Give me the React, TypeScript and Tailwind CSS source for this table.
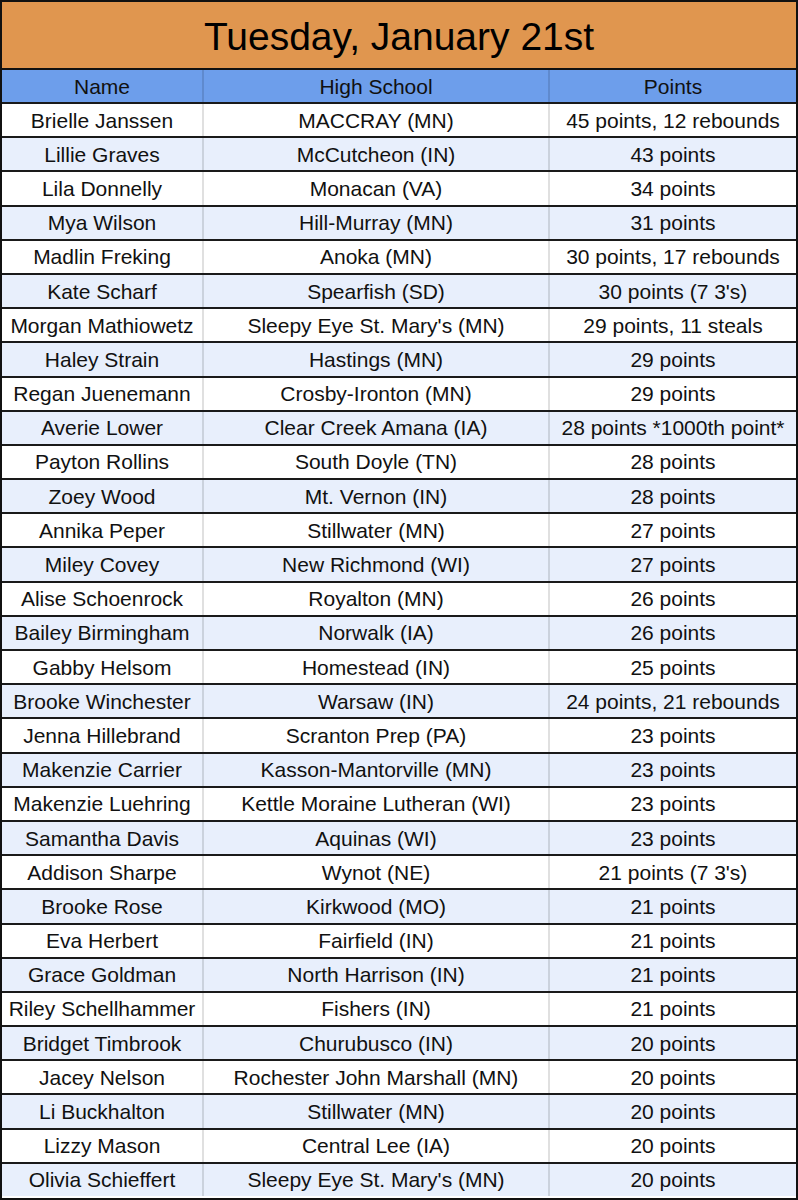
import React from "react";

const rows: [string, string, string][] = [
  ["Brielle Janssen", "MACCRAY (MN)", "45 points, 12 rebounds"],
  ["Lillie Graves", "McCutcheon (IN)", "43 points"],
  ["Lila Donnelly", "Monacan (VA)", "34 points"],
  ["Mya Wilson", "Hill-Murray (MN)", "31 points"],
  ["Madlin Freking", "Anoka (MN)", "30 points, 17 rebounds"],
  ["Kate Scharf", "Spearfish (SD)", "30 points (7 3's)"],
  ["Morgan Mathiowetz", "Sleepy Eye St. Mary's (MN)", "29 points, 11 steals"],
  ["Haley Strain", "Hastings (MN)", "29 points"],
  ["Regan Juenemann", "Crosby-Ironton (MN)", "29 points"],
  ["Averie Lower", "Clear Creek Amana (IA)", "28 points *1000th point*"],
  ["Payton Rollins", "South Doyle (TN)", "28 points"],
  ["Zoey Wood", "Mt. Vernon (IN)", "28 points"],
  ["Annika Peper", "Stillwater (MN)", "27 points"],
  ["Miley Covey", "New Richmond (WI)", "27 points"],
  ["Alise Schoenrock", "Royalton (MN)", "26 points"],
  ["Bailey Birmingham", "Norwalk (IA)", "26 points"],
  ["Gabby Helsom", "Homestead (IN)", "25 points"],
  ["Brooke Winchester", "Warsaw (IN)", "24 points, 21 rebounds"],
  ["Jenna Hillebrand", "Scranton Prep (PA)", "23 points"],
  ["Makenzie Carrier", "Kasson-Mantorville (MN)", "23 points"],
  ["Makenzie Luehring", "Kettle Moraine Lutheran (WI)", "23 points"],
  ["Samantha Davis", "Aquinas (WI)", "23 points"],
  ["Addison Sharpe", "Wynot (NE)", "21 points (7 3's)"],
  ["Brooke Rose", "Kirkwood (MO)", "21 points"],
  ["Eva Herbert", "Fairfield (IN)", "21 points"],
  ["Grace Goldman", "North Harrison (IN)", "21 points"],
  ["Riley Schellhammer", "Fishers (IN)", "21 points"],
  ["Bridget Timbrook", "Churubusco (IN)", "20 points"],
  ["Jacey Nelson", "Rochester John Marshall (MN)", "20 points"],
  ["Li Buckhalton", "Stillwater (MN)", "20 points"],
  ["Lizzy Mason", "Central Lee (IA)", "20 points"],
  ["Olivia Schieffert", "Sleepy Eye St. Mary's (MN)", "20 points"],
];

export default function App() {
  return (
    <div
      className="w-[798px] h-[1200px] border-2 border-[#111] bg-white text-[#111] overflow-hidden"
      style={{ fontFamily: '"Liberation Sans", Arial, sans-serif' }}
    >
      <div className="h-[66px] bg-[#e0964f] flex items-center justify-center pt-[3px] text-[39px] leading-none text-black">
        Tuesday, January 21st
      </div>
      <div className="h-[34px] border-t-2 border-[#111] bg-[#6d9eeb] grid grid-cols-[200px_346px_1fr] text-[21px] leading-none">
        <div className="flex items-center justify-center">Name</div>
        <div className="flex items-center justify-center border-l-2 border-[rgba(0,0,0,0.12)]">High School</div>
        <div className="flex items-center justify-center border-l-2 border-[rgba(0,0,0,0.12)]">Points</div>
      </div>
      {rows.map((r, i) => (
        <div
          key={i}
          className={`h-[34.1875px] border-t-2 border-[#1a1a1a] grid grid-cols-[200px_346px_1fr] text-[21px] leading-none ${
            i % 2 === 1 ? "bg-[#e8effc]" : "bg-white"
          }`}
        >
          <div className="flex items-center justify-center whitespace-nowrap">{r[0]}</div>
          <div className="flex items-center justify-center whitespace-nowrap border-l-2 border-[rgba(0,0,0,0.12)]">{r[1]}</div>
          <div className="flex items-center justify-center whitespace-nowrap border-l-2 border-[rgba(0,0,0,0.12)]">{r[2]}</div>
        </div>
      ))}
    </div>
  );
}
